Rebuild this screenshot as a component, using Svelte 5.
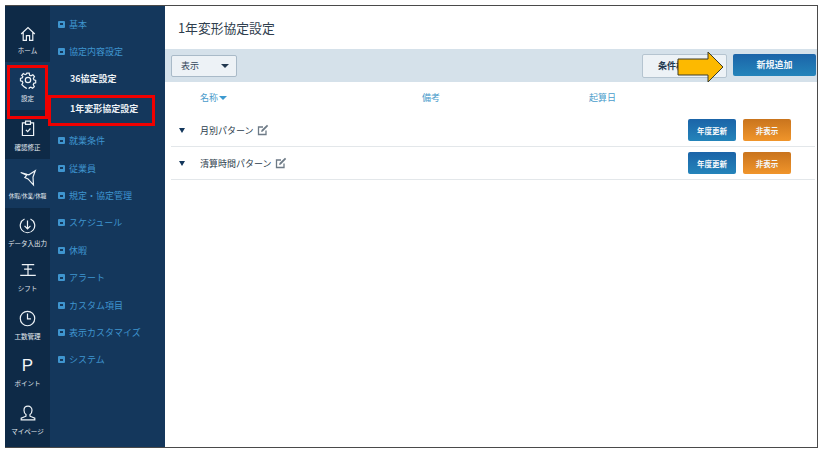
<script>
  const railItems = [
    { key: 'home', label: 'ホーム', h: 54 },
    { key: 'gear', label: '設定', h: 48, active: true },
    { key: 'check', label: '確認修正', h: 48.5 },
    { key: 'bird', label: '休暇/休業/休職', h: 49.5, active: true, small: true },
    { key: 'down', label: 'データ入出力', h: 47 },
    { key: 'shift', label: 'シフト', h: 45 },
    { key: 'clock', label: '工数管理', h: 48 },
    { key: 'point', label: 'ポイント', h: 47 },
    { key: 'user', label: 'マイページ', h: 48 }
  ];

  const rows = ['月別パターン', '清算時間パターン'];
</script>

<div class="frame">
  <nav class="rail">
    {#each railItems as item}
      <div class="rail-item" class:active={item.active} style="height: {item.h}px">
        <div class="rail-icon">
          {#if item.key === 'home'}
            <svg width="16" height="16" viewBox="0 0 20 20"><path d="M1.500 10 10 2l8.500 8M4 8v10h4v-6h4v6h4V8" /></svg>
          {:else if item.key === 'gear'}
            <svg width="18" height="18" viewBox="0 0 20 20"><circle cx="10" cy="10" r="3" /><path d="M8.500 1.500h3l.5 2.600 1.700.8 2.300-1.300 2 2.200-1.400 2.200.6 1.700 2.300.8v3l-2.300.6-.7 1.800 1.300 2.200-2.100 2.100-2.200-1.400-1.800.7-.6 2.400h-3l-.6-2.400-1.800-.7L4.500 17.700l-2.100-2.100 1.300-2.200-.7-1.800-2.300-.6v-3l2.300-.8.600-1.700L2.200 4.300l2-2.200 2.300 1.300 1.500-.8z" transform="translate(1 1) scale(.9)" /></svg>
          {:else if item.key === 'check'}
            <svg width="14" height="17" viewBox="0 0 20 24"><path d="M6.500 4H2v18h16V4h-4.500M6.500 1.500h7V6h-7zM7 14l2.500 2.500L13.500 12" /></svg>
          {:else if item.key === 'bird'}
            <svg width="20" height="20" viewBox="0 0 22 22"><path d="M3 5l7 2 2 .5L19 3l-2.500 7 .5 8.500-6-6.500-3.500-1.500 2-2.500z" /></svg>
          {:else if item.key === 'down'}
            <svg width="17" height="17" viewBox="0 0 20 20"><path d="M6.500 2.300a8.500 8.500 0 1 0 7 0M10 4v10M6.500 10.500 10 14l3.500-3.500" /></svg>
          {:else if item.key === 'shift'}
            <svg width="18" height="14" viewBox="0 0 22 18"><path d="M3 2h16M11 2v14M6 8h10M1 16h20" /></svg>
          {:else if item.key === 'clock'}
            <svg width="17" height="17" viewBox="0 0 20 20"><circle cx="10" cy="10" r="8.500" /><path d="M10 4v6.500h4" /></svg>
          {:else if item.key === 'point'}
            <span class="point">P</span>
          {:else}
            <svg width="18" height="16" viewBox="0 0 20 20"><path d="M1.500 18.500h17v-2l-6-2.500v-2c2-1.500 2.500-3 2.500-5.500 0-3-2-5-5-5s-5 2-5 5c0 2.500.5 4 2.500 5.500v2l-6 2.500z" /></svg>
          {/if}
        </div>
        <span class="rail-label" class:small={item.small}>{item.label}</span>
      </div>
    {/each}
  </nav>

  <aside class="submenu">
    <div class="group">基本</div>
    <div class="group open">協定内容設定</div>
    <div class="sub">36協定設定</div>
    <div class="sub current">1年変形協定設定</div>
    <div class="group">就業条件</div>
    <div class="group">従業員</div>
    <div class="group">規定・協定管理</div>
    <div class="group">スケジュール</div>
    <div class="group">休暇</div>
    <div class="group">アラート</div>
    <div class="group">カスタム項目</div>
    <div class="group">表示カスタマイズ</div>
    <div class="group">システム</div>
  </aside>

  <main class="content">
    <h1>1年変形協定設定</h1>
    <div class="toolbar">
      <button class="select">表示<span class="caret"></span></button>
      <div class="toolbar-right">
        <button class="cond">条件検索</button>
        <button class="add">新規追加</button>
      </div>
    </div>
    <div class="head">
      <span class="col-name">名称<span class="sort"></span></span>
      <span class="col-note">備考</span>
      <span class="col-date">起算日</span>
    </div>
    {#each rows as row}
      <div class="row">
        <span class="toggle"></span>
        <span class="row-name">{row}</span>
        <svg class="edit" width="12" height="12" viewBox="0 0 12 12"><path d="M9 6.500V10.500H1.500V3H6" /><path class="pen" d="M4.500 6 10 .8l1.200 1.200L5.800 7.500 4.200 8z" /></svg>
        <div class="row-actions">
          <button class="blue">年度更新</button>
          <button class="orange">非表示</button>
        </div>
      </div>
    {/each}
  </main>

  <!-- annotations drawn over the screen -->
  <div class="mark mark-rail"></div>
  <div class="mark mark-sub"></div>
  <svg class="arrow" width="48" height="32" viewBox="0 0 48 32"><path d="M1 8h30V1l15 15-15 15v-7H1z" /></svg>
</div>

<style>
  :global(body) {
    margin: 0;
    background: #fff;
  }
  .frame {
    position: absolute;
    left: 5px;
    top: 5px;
    width: 813px;
    height: 443px;
    box-sizing: border-box;
    border: 1px solid #4a4a4a;
    border-left: none;
    display: flex;
    overflow: hidden;
    font-family: "Noto Sans CJK JP", "Noto Sans", sans-serif;
    background: #fff;
  }
  .rail {
    width: 45px;
    flex: none;
    background: #0e2a47;
    display: flex;
    flex-direction: column;
    padding-top: 2px;
  }
  .rail-item {
    display: flex;
    flex-direction: column;
    align-items: center;
    justify-content: flex-end;
    padding-bottom: 6px;
    box-sizing: border-box;
    flex: none;
  }
  .rail-item.active {
    background: #14375c;
  }
  .rail-icon {
    height: 24px;
    display: flex;
    align-items: center;
    justify-content: center;
  }
  .rail-item:first-child .rail-icon {
    margin-bottom: -2px;
  }
  .rail-icon svg {
    fill: none;
    stroke: #eef3f7;
    stroke-width: 1.2;
  }
  .rail-icon svg * {
    vector-effect: non-scaling-stroke;
  }
  .point {
    color: #f2f5f8;
    font-family: "Liberation Sans", sans-serif;
    font-size: 17px;
    line-height: 1;
  }
  .rail-label {
    color: #e3e9ef;
    font-size: 6.5px;
    line-height: 12px;
    white-space: nowrap;
  }
  .rail-label.small {
    font-size: 5.5px;
  }
  .submenu {
    width: 115px;
    flex: none;
    background: #14375c;
    padding-top: 4.5px;
    box-sizing: border-box;
  }
  .group {
    height: 27.4px;
    padding-left: 8px;
    display: flex;
    align-items: center;
    gap: 4px;
    font-size: 9px;
    color: #3f95cf;
    white-space: nowrap;
  }
  .group::before {
    content: "";
    width: 7px;
    height: 7px;
    flex: none;
    border-radius: 1px;
    background: linear-gradient(#14375c, #14375c) center / 3px 2px no-repeat, #3f95cf;
  }
  .sub {
    height: 27.4px;
    padding-left: 20px;
    display: flex;
    align-items: center;
    font-size: 9px;
    font-weight: 700;
    color: #eef2f6;
    white-space: nowrap;
  }
  .sub.current {
    box-shadow: inset 1px 0 0 #fff;
    margin-top: 2.5px;
    margin-bottom: 4.5px;
  }
  .content {
    flex: 1;
    min-width: 0;
    color: #33475b;
  }
  h1 {
    margin: 0;
    height: 43px;
    padding-left: 13px;
    font-size: 12.8px;
    font-weight: 400;
    line-height: 44px;
    color: #2f3e4e;
  }
  .toolbar {
    height: 33px;
    background: #d5e1ea;
    display: flex;
    align-items: center;
    justify-content: space-between;
    padding: 0 1px 0 6px;
  }
  .toolbar-right {
    display: flex;
    gap: 6px;
  }
  button {
    font-family: inherit;
    border: none;
    padding: 0;
    border-radius: 2px;
    white-space: nowrap;
  }
  .select {
    width: 66px;
    height: 22px;
    background: #edf2f6;
    border: 1px solid #a9bac8;
    color: #33475b;
    font-size: 9px;
    display: flex;
    align-items: center;
    justify-content: space-between;
    padding: 0 7px 0 9px;
    box-sizing: border-box;
  }
  .caret {
    border-top: 4px solid #22384f;
    border-left: 4px solid transparent;
    border-right: 4px solid transparent;
  }
  .cond {
    width: 85px;
    height: 24px;
    background: #edf2f6;
    border: 1px solid #b5c4d0;
    box-sizing: border-box;
    color: #22384f;
    font-size: 9px;
    font-weight: 700;
    text-align: left;
    padding-left: 15px;
  }
  .add {
    width: 83px;
    height: 22px;
    background: linear-gradient(#1b64a8, #2484ba);
    color: #eef5fa;
    font-size: 9px;
    font-weight: 700;
  }
  .head {
    height: 32px;
    padding-bottom: 1px;
    box-sizing: border-box;
    display: flex;
    align-items: center;
    font-size: 9px;
    color: #4a9ccb;
  }
  .col-name {
    margin-left: 35px;
    width: 222px;
    display: flex;
    align-items: center;
    gap: 1px;
  }
  .col-note {
    width: 167px;
  }
  .sort {
    border-top: 4px solid #3d9ad0;
    border-left: 4px solid transparent;
    border-right: 4px solid transparent;
  }
  .row {
    height: 33px;
    box-sizing: border-box;
    margin: 0 2px 0 6px;
    border-bottom: 1px solid #e3e7ea;
    display: flex;
    align-items: center;
    font-size: 9px;
    color: #2c3c4c;
  }
  .toggle {
    border-top: 5.5px solid #14375c;
    border-left: 3.5px solid transparent;
    border-right: 3.5px solid transparent;
    margin: 0 15px 0 8px;
  }
  .edit {
    margin-left: 3px;
    fill: none;
    stroke: #6d7a86;
    stroke-width: 1.3;
  }
  .edit .pen {
    fill: #6d7a86;
    stroke: none;
  }
  .row-actions {
    margin-left: auto;
    margin-right: 24px;
    display: flex;
    gap: 7px;
  }
  .blue,
  .orange {
    height: 22px;
    width: 48px;
    color: #f4f8fb;
    font-size: 7.5px;
    font-weight: 700;
  }
  .blue {
    background: linear-gradient(#1b64a8, #2484ba);
  }
  .orange {
    background: linear-gradient(#c9741d, #f0952b);
  }
  .mark {
    position: absolute;
    border: 3px solid #f00000;
    box-sizing: border-box;
  }
  .mark-rail {
    left: 2px;
    top: 59px;
    width: 41px;
    height: 54px;
  }
  .mark-sub {
    left: 43px;
    top: 89px;
    width: 107px;
    height: 31px;
  }
  .arrow {
    position: absolute;
    left: 672px;
    top: 45px;
  }
  .arrow path {
    fill: #fdb900;
    stroke: #3d3d2a;
    stroke-width: 1;
  }
</style>
